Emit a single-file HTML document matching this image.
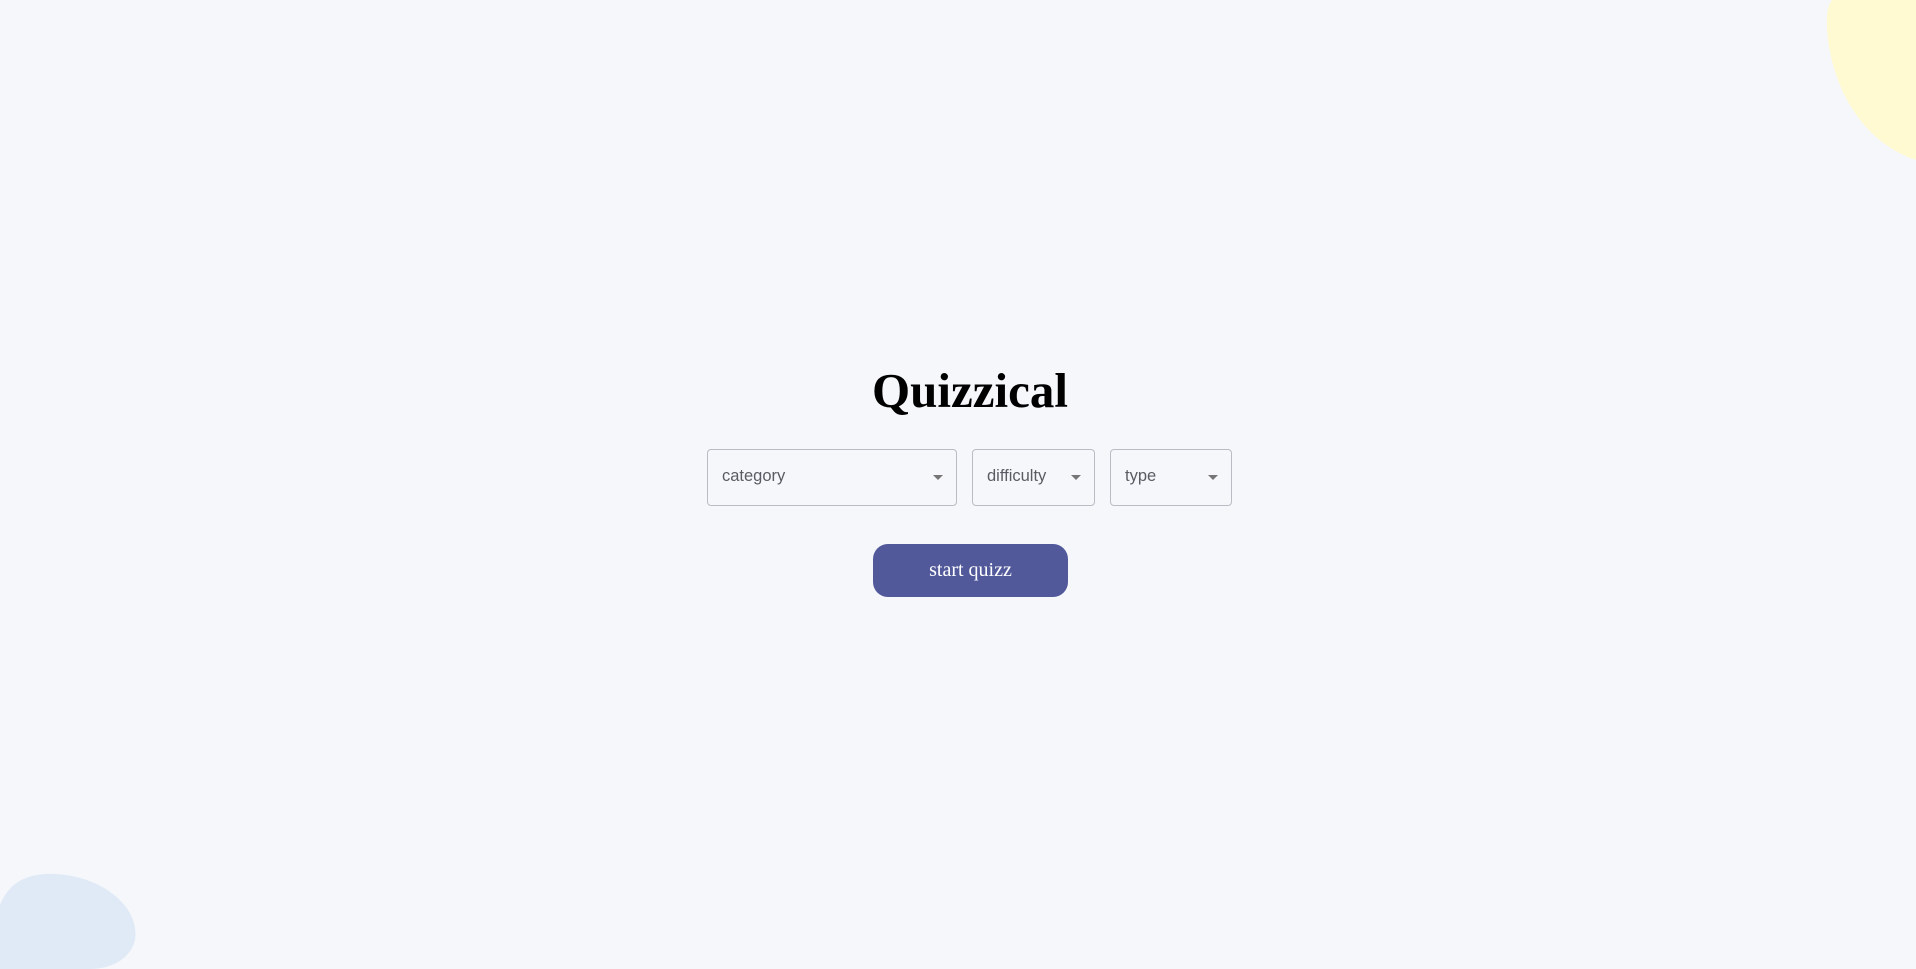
<!DOCTYPE html>
<html><head><style>
html,body{margin:0;padding:0;width:1916px;height:969px;overflow:hidden;background:#f5f7fb;position:relative}
.t{position:absolute;left:870px;width:200px;top:361px;text-align:center;font:bold 49px "Liberation Serif",serif;color:#000;line-height:60px}
.s{position:absolute;top:449px;height:55px;border:1px solid #babcc3;border-radius:4px;box-sizing:content-box;font:16.5px "Liberation Sans",sans-serif;color:#5a5c63}
.s span{position:absolute;left:14px;top:17px}
.s i{position:absolute;right:13px;top:25px;width:0;height:0;border-left:5px solid transparent;border-right:5px solid transparent;border-top:5px solid #757575}
.b{position:absolute;left:873px;top:544px;width:195px;height:53px;border-radius:15px;background:#52599a;color:#fff;font:20px "Liberation Serif",serif;text-align:center;line-height:53px}
</style></head><body>
<svg style="position:absolute;left:0;top:0" width="1916" height="969">
<path d="M1916 0 L1832 0 C1826 8 1826 20 1828 40 C1836 100 1870 145 1916 160 Z" fill="#fffad1"/>
<path d="M0 905 C10 880 30 873 55 874 C100 876 140 905 135 940 C130 960 110 969 90 969 L0 969 Z" fill="#e0eaf6"/>
</svg>
<div class="t">Quizzical</div>
<div class="s" style="left:707px;width:248px"><span>category</span><i></i></div>
<div class="s" style="left:972px;width:121px"><span>difficulty</span><i></i></div>
<div class="s" style="left:1110px;width:120px"><span>type</span><i></i></div>
<div class="b">start quizz</div>
</body></html>
